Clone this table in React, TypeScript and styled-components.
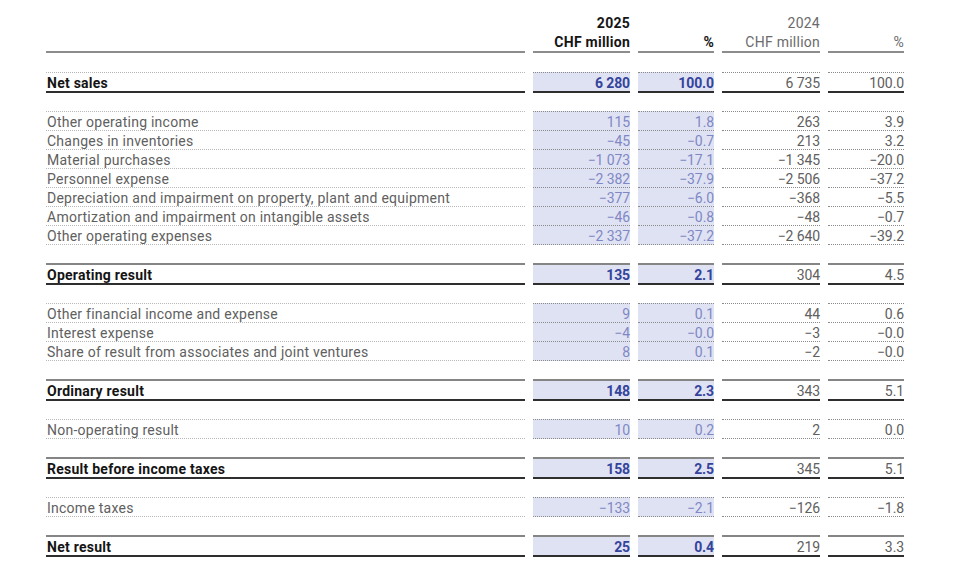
import React from "react";
import styled, { createGlobalStyle, css } from "styled-components";

const GlobalStyle = createGlobalStyle`
  html, body {
    margin: 0;
    padding: 0;
    background: #ffffff;
  }
  body {
    font-family: Roboto, "Liberation Sans", Arial, sans-serif;
    -webkit-font-smoothing: antialiased;
  }
`;

const Sheet = styled.div`
  width: 962px;
  height: 570px;
  padding-left: 46px;
  box-sizing: border-box;
  overflow: hidden;
`;

const Row = styled.div<{ $gap?: number }>`
  display: grid;
  grid-template-columns: 479px 97px 76px 98px 76px;
  column-gap: 8px;
  margin-top: ${(p) => (p.$gap ? `${p.$gap}px` : "0")};
`;

type Kind = "head" | "total" | "item";

const Cell = styled.div<{
  $kind: Kind;
  $shade?: boolean;
  $label?: boolean;
  $current?: boolean;
  $first?: boolean;
  $dottedTop?: boolean;
}>`
  box-sizing: border-box;
  font-size: 14px;
  letter-spacing: ${(p) => (p.$label || p.$kind === "head" ? "0.25px" : "-0.1px")};
  white-space: nowrap;
  text-align: ${(p) => (p.$label ? "left" : "right")};
  padding-left: ${(p) => (p.$label ? "1px" : "0")};

  ${(p) =>
    p.$kind === "head" &&
    css`
      padding-top: 14px;
      line-height: 19px;
      height: 53px;
      border-bottom: 2px solid #8c8c8c;
      font-weight: ${p.$current ? 700 : 400};
      color: ${p.$current ? "#151515" : "#6b6b6b"};
    `}

  ${(p) =>
    p.$kind === "total" &&
    css`
      line-height: 20px;
      font-weight: ${p.$label || p.$current ? 700 : 400};
      border-top: ${p.$dottedTop
        ? `1px dotted ${p.$label ? "#b5b5b5" : "#8a8a8a"}`
        : "2px solid #858585"};
      border-bottom: 2px solid #2e2e2e;
      height: ${p.$dottedTop ? "21px" : "22px"};
      color: ${p.$label ? "#141414" : p.$current ? "#34449b" : "#606060"};
      background: ${p.$shade ? "#dfe2f3" : "transparent"};
    `}

  ${(p) =>
    p.$kind === "item" &&
    css`
      height: ${p.$first ? "20px" : "19px"};
      line-height: 20px;
      border-bottom: 1px dotted ${p.$label ? "#b8b8b8" : "#8a8a8a"};
      border-top: ${p.$first ? `1px dotted ${p.$label ? "#b8b8b8" : "#8a8a8a"}` : "none"};
      color: ${p.$label ? "#606060" : p.$current ? "#7f88c4" : "#606060"};
      background: ${p.$shade ? "#dfe2f3" : "transparent"};
    `}
`;

type Line = [string, string, string, string, string];

type Section =
  | { type: "total"; line: Line; dottedTop?: boolean }
  | { type: "group"; lines: Line[] };

const sections: Section[] = [
  { type: "total", dottedTop: true, line: ["Net sales", "6 280", "100.0", "6 735", "100.0"] },
  {
    type: "group",
    lines: [
      ["Other operating income", "115", "1.8", "263", "3.9"],
      ["Changes in inventories", "−45", "−0.7", "213", "3.2"],
      ["Material purchases", "−1 073", "−17.1", "−1 345", "−20.0"],
      ["Personnel expense", "−2 382", "−37.9", "−2 506", "−37.2"],
      ["Depreciation and impairment on property, plant and equipment", "−377", "−6.0", "−368", "−5.5"],
      ["Amortization and impairment on intangible assets", "−46", "−0.8", "−48", "−0.7"],
      ["Other operating expenses", "−2 337", "−37.2", "−2 640", "−39.2"],
    ],
  },
  { type: "total", line: ["Operating result", "135", "2.1", "304", "4.5"] },
  {
    type: "group",
    lines: [
      ["Other financial income and expense", "9", "0.1", "44", "0.6"],
      ["Interest expense", "−4", "−0.0", "−3", "−0.0"],
      ["Share of result from associates and joint ventures", "8", "0.1", "−2", "−0.0"],
    ],
  },
  { type: "total", line: ["Ordinary result", "148", "2.3", "343", "5.1"] },
  { type: "group", lines: [["Non-operating result", "10", "0.2", "2", "0.0"]] },
  { type: "total", line: ["Result before income taxes", "158", "2.5", "345", "5.1"] },
  { type: "group", lines: [["Income taxes", "−133", "−2.1", "−126", "−1.8"]] },
  { type: "total", line: ["Net result", "25", "0.4", "219", "3.3"] },
];

function Cells({ line, kind, first, dottedTop }: { line: Line; kind: Kind; first?: boolean; dottedTop?: boolean }) {
  return (
    <>
      {line.map((v, i) => (
        <Cell
          key={i}
          $kind={kind}
          $label={i === 0}
          $shade={i === 1 || i === 2}
          $current={i === 1 || i === 2}
          $first={first}
          $dottedTop={dottedTop}
        >
          {v}
        </Cell>
      ))}
    </>
  );
}

export default function App() {
  return (
    <>
      <GlobalStyle />
      <Sheet>
        <Row>
          <Cell $kind="head" $label />
          <Cell $kind="head" $current>
            2025
            <br />
            CHF million
          </Cell>
          <Cell $kind="head" $current>
            <br />%
          </Cell>
          <Cell $kind="head">
            2024
            <br />
            CHF million
          </Cell>
          <Cell $kind="head">
            <br />%
          </Cell>
        </Row>
        {sections.map((s, si) =>
          s.type === "total" ? (
            <Row key={si} $gap={si === 0 ? 19 : 18}>
              <Cells line={s.line} kind="total" dottedTop={s.dottedTop} />
            </Row>
          ) : (
            <React.Fragment key={si}>
              {s.lines.map((l, li) => (
                <Row key={li} $gap={li === 0 ? 18 : 0}>
                  <Cells line={l} kind="item" first={li === 0} />
                </Row>
              ))}
            </React.Fragment>
          )
        )}
      </Sheet>
    </>
  );
}
